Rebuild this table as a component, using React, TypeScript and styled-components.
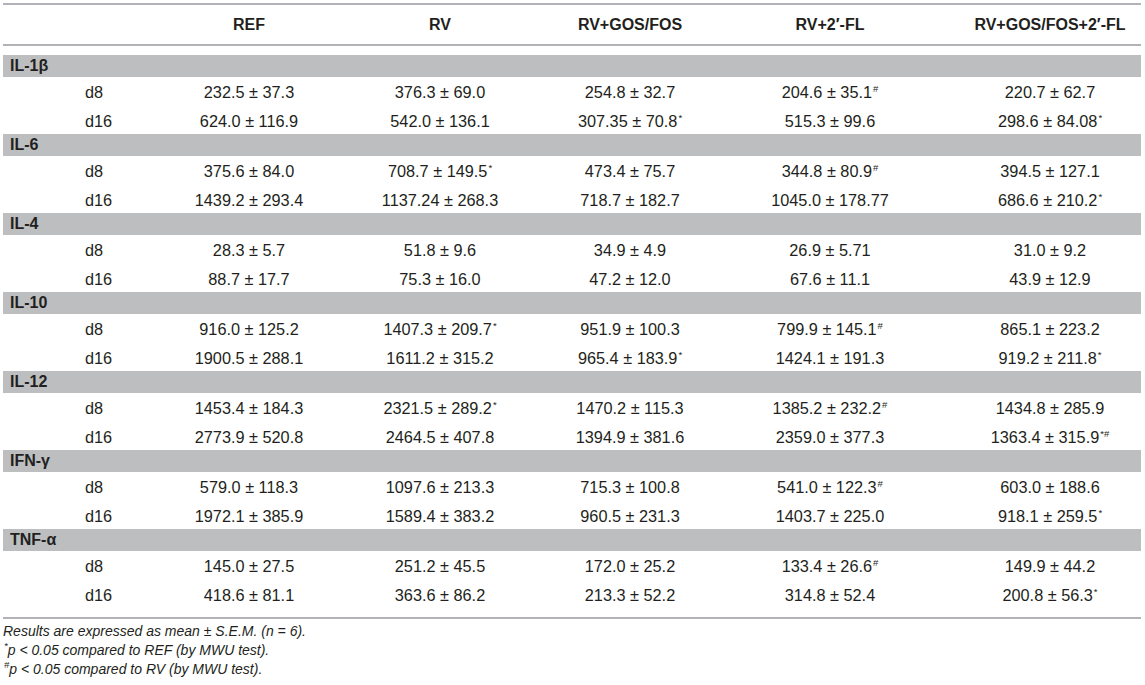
import React from "react";
import styled, { createGlobalStyle } from "styled-components";

const GlobalStyle = createGlobalStyle`
  html, body {
    margin: 0;
    padding: 0;
    background: #ffffff;
  }
  body {
    font-family: "Liberation Sans", Arial, Helvetica, sans-serif;
    color: #231f20;
  }
`;

const Page = styled.div`
  padding: 3px 4px 0 3px;
  width: 1138px;
`;

const Table = styled.table`
  width: 1138px;
  border-collapse: collapse;
  table-layout: fixed;
  font-size: 16.3px;
  border-top: 2px solid #b1b3b6;
  border-bottom: 2px solid #b1b3b6;
`;

const HeadRow = styled.tr`
  height: 41px;
  border-bottom: 2px solid #b1b3b6;
`;

const HeadCell = styled.th<{ $padRight?: number }>`
  font-weight: bold;
  font-size: 16px;
  text-align: center;
  padding: 0 ${(p) => p.$padRight ?? 0}px 0 0;
`;

const Spacer = styled.tr<{ $h: number }>`
  height: ${(p) => p.$h}px;
`;

const BandRow = styled.tr`
  height: 22px;
  background: #bcbec0;
`;

const BandCell = styled.td`
  font-weight: bold;
  font-size: 16px;
  padding: 0 0 0 7px;
  line-height: 22px;
`;

const DataRow = styled.tr`
  height: 28.5px;
`;

const DayCell = styled.td`
  padding: 3px 0 0 82px;
  text-align: left;
`;

const ValueCell = styled.td<{ $padRight?: number }>`
  text-align: center;
  white-space: nowrap;
  padding: 3px ${(p) => p.$padRight ?? 0}px 0 0;
`;

const Mark = styled.sup`
  font-size: 9.5px;
  line-height: 0;
  vertical-align: 6px;
  margin-left: 1px;
`;

const Notes = styled.div`
  padding-top: 3px;
  font-size: 14px;
  font-style: italic;
  line-height: 19px;
`;

const colWidths = [150, 192, 190, 190, 234, 182];
const padRight = [0, 0, 0, 0, 24, 0];

const heads = ["REF", "RV", "RV+GOS/FOS", "RV+2\u2032-FL", "RV+GOS/FOS+2\u2032-FL"];

type Row = { day: string; values: string[] };
type Group = { name: string; rows: Row[] };

const groups: Group[] = [
  {
    name: "IL-1\u03b2",
    rows: [
      { day: "d8", values: ["232.5 ± 37.3", "376.3 ± 69.0", "254.8 ± 32.7", "204.6 ± 35.1#", "220.7 ± 62.7"] },
      { day: "d16", values: ["624.0 ± 116.9", "542.0 ± 136.1", "307.35 ± 70.8*", "515.3 ± 99.6", "298.6 ± 84.08*"] },
    ],
  },
  {
    name: "IL-6",
    rows: [
      { day: "d8", values: ["375.6 ± 84.0", "708.7 ± 149.5*", "473.4 ± 75.7", "344.8 ± 80.9#", "394.5 ± 127.1"] },
      { day: "d16", values: ["1439.2 ± 293.4", "1137.24 ± 268.3", "718.7 ± 182.7", "1045.0 ± 178.77", "686.6 ± 210.2*"] },
    ],
  },
  {
    name: "IL-4",
    rows: [
      { day: "d8", values: ["28.3 ± 5.7", "51.8 ± 9.6", "34.9 ± 4.9", "26.9 ± 5.71", "31.0 ± 9.2"] },
      { day: "d16", values: ["88.7 ± 17.7", "75.3 ± 16.0", "47.2 ± 12.0", "67.6 ± 11.1", "43.9 ± 12.9"] },
    ],
  },
  {
    name: "IL-10",
    rows: [
      { day: "d8", values: ["916.0 ± 125.2", "1407.3 ± 209.7*", "951.9 ± 100.3", "799.9 ± 145.1#", "865.1 ± 223.2"] },
      { day: "d16", values: ["1900.5 ± 288.1", "1611.2 ± 315.2", "965.4 ± 183.9*", "1424.1 ± 191.3", "919.2 ± 211.8*"] },
    ],
  },
  {
    name: "IL-12",
    rows: [
      { day: "d8", values: ["1453.4 ± 184.3", "2321.5 ± 289.2*", "1470.2 ± 115.3", "1385.2 ± 232.2#", "1434.8 ± 285.9"] },
      { day: "d16", values: ["2773.9 ± 520.8", "2464.5 ± 407.8", "1394.9 ± 381.6", "2359.0 ± 377.3", "1363.4 ± 315.9*#"] },
    ],
  },
  {
    name: "IFN-\u03b3",
    rows: [
      { day: "d8", values: ["579.0 ± 118.3", "1097.6 ± 213.3", "715.3 ± 100.8", "541.0 ± 122.3#", "603.0 ± 188.6"] },
      { day: "d16", values: ["1972.1 ± 385.9", "1589.4 ± 383.2", "960.5 ± 231.3", "1403.7 ± 225.0", "918.1 ± 259.5*"] },
    ],
  },
  {
    name: "TNF-\u03b1",
    rows: [
      { day: "d8", values: ["145.0 ± 27.5", "251.2 ± 45.5", "172.0 ± 25.2", "133.4 ± 26.6#", "149.9 ± 44.2"] },
      { day: "d16", values: ["418.6 ± 81.1", "363.6 ± 86.2", "213.3 ± 52.2", "314.8 ± 52.4", "200.8 ± 56.3*"] },
    ],
  },
];

// split trailing * / # markers off a value so they can be raised
const renderValue = (v: string) => {
  const m = v.match(/^(.*?)([*#]+)$/);
  if (!m) return v;
  return (
    <>
      {m[1]}
      <Mark>{m[2]}</Mark>
    </>
  );
};

const App = () => {
  return (
    <>
      <GlobalStyle />
      <Page>
        <Table>
          <colgroup>
            {colWidths.map((w, i) => (
              <col key={i} style={{ width: w }} />
            ))}
          </colgroup>
          <thead>
            <HeadRow>
              <HeadCell />
              {heads.map((h, i) => (
                <HeadCell key={h} $padRight={padRight[i + 1]}>
                  {h}
                </HeadCell>
              ))}
            </HeadRow>
          </thead>
          <tbody>
            <Spacer $h={10}>
              <td colSpan={6} />
            </Spacer>
            {groups.map((g) => (
              <React.Fragment key={g.name}>
                <BandRow>
                  <BandCell colSpan={6}>{g.name}</BandCell>
                </BandRow>
                {g.rows.map((r) => (
                  <DataRow key={r.day}>
                    <DayCell>{r.day}</DayCell>
                    {r.values.map((v, i) => (
                      <ValueCell key={i} $padRight={padRight[i + 1]}>
                        {renderValue(v)}
                      </ValueCell>
                    ))}
                  </DataRow>
                ))}
              </React.Fragment>
            ))}
            <Spacer $h={10}>
              <td colSpan={6} />
            </Spacer>
          </tbody>
        </Table>
        <Notes>
          <div>Results are expressed as mean ± S.E.M. (n = 6).</div>
          <div>
            <Mark>*</Mark>p &lt; 0.05 compared to REF (by MWU test).
          </div>
          <div>
            <Mark>#</Mark>p &lt; 0.05 compared to RV (by MWU test).
          </div>
        </Notes>
      </Page>
    </>
  );
};

export default App;
